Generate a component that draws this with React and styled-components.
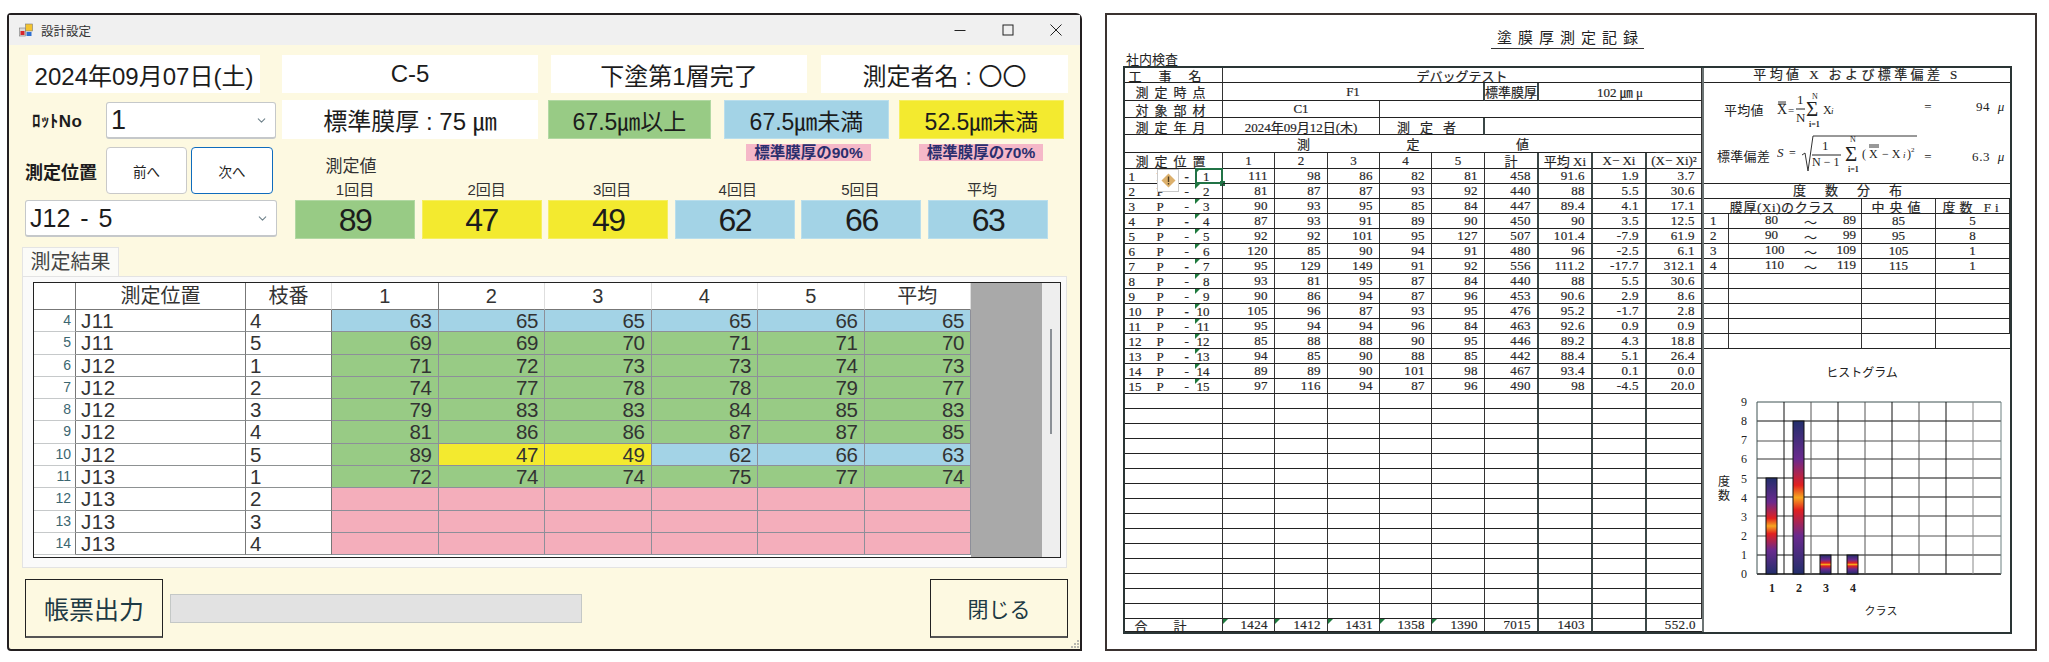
import React from 'react';
import styled, { createGlobalStyle } from 'styled-components';
import { ChevronDown } from 'lucide-react';

const GOTHIC = '"Liberation Sans", "Noto Sans CJK JP", sans-serif';
const MINCHO = '"Liberation Serif", "Noto Sans CJK JP", serif';

const GREEN = '#98cb85';
const BLUE = '#a3d3e6';
const YELLOW = '#f3ea2f';
const PINK = '#f4aebb';

const GlobalStyle = createGlobalStyle`
  html, body {
    margin: 0;
    background: #fff;
    overflow: hidden;
  }
`;

const Page = styled.div`
  display: flex;
  align-items: flex-start;
  width: 2049px;
  height: 662px;
  padding: 13px 0 0 7px;
  box-sizing: border-box;
`;

/* ---- left: the measuring window ---- */

const Window = styled.div`
  position: relative;
  width: 1075px;
  height: 638px;
  box-sizing: border-box;
  border: 2px solid #231f20;
  border-radius: 4px 6px 0 4px;
  background: #fdf9e1;
  font-family: ${GOTHIC};
  color: #1c1c1c;
  flex: none;
`;

const TitleBar = styled.div`
  display: flex;
  align-items: center;
  height: 30px;
  padding: 0 18px 0 10px;
  background: #f0f0f0;
  font-size: 12.5px;
  color: #333;
`;

const TitleText = styled.span`
  margin-left: 8px;
  margin-right: auto;
`;

const WinControls = styled.div`
  display: flex;
  gap: 36px;
  align-items: center;
`;

const WinRow = styled.div`
  display: flex;
  margin-top: ${p => p.$top || 0}px;
  padding-left: ${p => p.$left}px;
`;

const InfoBox = styled.div`
  display: flex;
  align-items: center;
  justify-content: center;
  width: ${p => p.$w}px;
  height: ${p => p.$h || 38}px;
  margin-left: ${p => p.$gap || 0}px;
  background: #fff;
  font-size: 24px;
  white-space: nowrap;
`;

const LegendBox = styled.div`
  display: flex;
  align-items: center;
  justify-content: center;
  width: ${p => p.$w}px;
  height: 39px;
  margin-left: ${p => p.$gap || 0}px;
  box-sizing: border-box;
  background: ${p => p.$bg};
  border: 1px solid rgba(255, 255, 255, 0.25);
  font-size: 23px;
  white-space: nowrap;
`;

const LotLabel = styled.div`
  width: 74px;
  height: 39px;
  display: flex;
  align-items: center;
  font-size: 17px;
  font-weight: 700;
  letter-spacing: 0.4px;
`;

const Combo = styled.div`
  display: flex;
  align-items: center;
  justify-content: space-between;
  width: ${p => p.$w}px;
  height: 37px;
  margin-top: ${p => p.$top || 0}px;
  padding: 0 7px 0 4px;
  box-sizing: border-box;
  background: #fff;
  border: 1px solid #c5c8ca;
  border-bottom-width: 2px;
  border-radius: 3px;
  font-size: ${p => p.$size}px;
  word-spacing: 3px;
  flex: none;

  & > svg {
    color: #70838c;
  }
`;

const LowerRow = styled.div`
  display: flex;
  margin-top: 5px;
  padding-left: 16px;
`;

const LeftCol = styled.div`
  width: 252px;
  padding-top: 3px;
  flex: none;
`;

const PositionRow = styled.div`
  display: flex;
  align-items: center;
  height: 47px;
`;

const PositionLabel = styled.div`
  width: 82px;
  font-size: 18px;
  font-weight: 700;
`;

const NavButton = styled.button`
  width: ${p => p.$w}px;
  height: 47px;
  margin-right: 4px;
  padding: 0;
  background: #fff;
  border: 1px solid ${p => (p.$focus ? '#0f6cbd' : '#c9c9c9')};
  border-radius: 4px;
  font-family: inherit;
  font-size: 13.5px;
  color: #222;
`;

const ValueCol = styled.div`
  margin-left: 5px;
  padding-left: 13px;
  flex: none;
`;

const NoteRow = styled.div`
  display: flex;
  height: 17px;
  padding-left: 451px;
`;

const Note = styled.div`
  width: ${p => p.$w}px;
  margin-right: ${p => p.$gap || 0}px;
  height: 17px;
  background: #f5b8c8;
  color: #2b2f6e;
  font-size: 15.5px;
  line-height: 17px;
  font-weight: 700;
  text-align: center;
  white-space: nowrap;
`;

const Caption = styled.div`
  width: 112px;
  margin-top: -3px;
  height: 18px;
  line-height: 18px;
  font-size: 17px;
  text-align: center;
  color: #333;
`;

const ValueGrid = styled.div`
  display: grid;
  grid-template-columns: repeat(6, 120px);
  column-gap: 6.6px;
  margin-top: 5px;
`;

const ValueLabel = styled.div`
  height: 18px;
  line-height: 18px;
  margin-left: ${p => p.$dx || 0}px;
  font-size: 15px;
  text-align: center;
  color: #333;
`;

const ValueBox = styled.div`
  height: 39px;
  margin-top: 1px;
  box-sizing: border-box;
  background: ${p => p.$bg};
  border: 1px solid rgba(255, 255, 255, 0.25);
  font-size: 32px;
  letter-spacing: -1.5px;
  line-height: 38px;
  text-align: center;
`;

const Tab = styled.div`
  width: 97px;
  height: 29px;
  margin: 8px 0 0 13px;
  box-sizing: border-box;
  background: #fbfbf8;
  border: 1px solid #e4e4e4;
  border-bottom: none;
  font-size: 20px;
  line-height: 28px;
  text-align: center;
  color: #444;
`;

const TabPanel = styled.div`
  width: 1045px;
  height: 292px;
  margin-left: 13px;
  padding: 5px 0 0 10px;
  box-sizing: border-box;
  background: #fafafa;
  border: 1px solid #e3e3e3;
`;

const GridFrame = styled.div`
  display: flex;
  width: 1028px;
  height: 276px;
  box-sizing: border-box;
  border: 1px solid #222;
  border-width: 1px 1.5px 1.5px 1.5px;
  overflow: hidden;
`;

const GridBody = styled.div`
  width: 937px;
  flex: none;
  background: #fff;
`;

const GridGray = styled.div`
  width: 71px;
  flex: none;
  background: #a9a9a9;
`;

const GridScroll = styled.div`
  display: flex;
  justify-content: center;
  width: 18px;
  padding-top: 46px;
  box-sizing: border-box;
  background: #eee;
`;

const ScrollThumb = styled.div`
  width: 2px;
  height: 105px;
  background: #8b9096;
`;

const GridRow = styled.div`
  display: grid;
  grid-template-columns: 42px 170px 86px repeat(6, 106.5px);
  height: ${p => (p.$head ? 27 : 22.3)}px;
`;

const HeadCell = styled.div`
  box-sizing: border-box;
  border-right: 1px solid ${p => (p.$dark ? '#777' : '#dedede')};
  border-bottom: 1px solid #777;
  font-size: 20px;
  line-height: 26px;
  text-align: center;
  color: #333;
`;

const RowHead = styled.div`
  box-sizing: border-box;
  padding-right: 4px;
  border-right: 1px solid #777;
  border-bottom: 1px solid #c6c9ca;
  font-size: 14px;
  line-height: 21px;
  text-align: right;
  color: #3b6670;
`;

const TextCell = styled.div`
  box-sizing: border-box;
  padding-left: ${p => p.$pad}px;
  border-right: 1px solid #777;
  border-bottom: 1px solid #8d9192;
  font-size: 20.5px;
  line-height: 21px;
  letter-spacing: 0.6px;
  color: #333;
`;

const NumCell = styled.div`
  box-sizing: border-box;
  padding-right: 6px;
  background: ${p => p.$bg};
  border-right: 1px solid #8d8f99;
  border-bottom: 1px solid #8d8f99;
  font-size: 20.5px;
  letter-spacing: -0.4px;
  line-height: 21px;
  text-align: right;
  color: #333;
`;

const FootRow = styled.div`
  display: flex;
  align-items: center;
  height: 59px;
  margin-top: 11px;
  padding: 0 12px 0 16px;
`;

const BigButton = styled.button`
  width: 138px;
  height: 59px;
  padding: 0;
  margin-left: ${p => (p.$right ? 'auto' : 0)};
  background: #fdf9e1;
  border: 1px solid #222;
  border-bottom: 2px solid #555;
  font-family: inherit;
  font-size: ${p => p.$size}px;
  color: #1d3a44;
`;

const Progress = styled.div`
  width: 412px;
  height: 29px;
  margin-left: 7px;
  box-sizing: border-box;
  background: #e2e2e2;
  border: 1px solid #c4c8c6;
`;

const Grip = styled.svg`
  position: absolute;
  right: 0;
  bottom: 0;
`;

/* ---- right: the printed sheet ---- */

const Doc = styled.div`
  width: 932px;
  height: 638px;
  margin-left: 23px;
  padding: 15px 0 0 16px;
  box-sizing: border-box;
  border: 2px solid #3a3230;
  background: #fff;
  font-family: ${MINCHO};
  color: #222;
  flex: none;
`;

const DocTitleWrap = styled.div`
  display: flex;
  justify-content: center;
  width: 889px;
  height: 19px;
`;

const DocTitle = styled.span`
  height: 18px;
  line-height: 17px;
  padding-left: 6px;
  border-bottom: 1px solid #333;
  font-size: 15px;
  letter-spacing: 6px;
`;

const DocSub = styled.div`
  height: 17px;
  font-size: 13px;
  line-height: 22px;
  padding-left: 3px;
`;

const Sheet = styled.div`
  display: flex;
  width: 889px;
  height: 568px;
  box-sizing: border-box;
  border: 2px solid #2a3535;
`;

const MainTable = styled.div`
  display: grid;
  grid-template-columns: 98px 52px 53px 52px 52px 53px 54px 54px 54px 55px;
  grid-template-rows: 15px 18px 17px 17px 18px 16px repeat(30, 15px) 13px;
  flex: none;
`;

const Cell = styled.div`
  position: relative;
  display: flex;
  align-items: center;
  justify-content: ${p => p.$align || 'center'};
  grid-column: span ${p => p.$span || 1};
  box-sizing: border-box;
  padding-right: ${p => (p.$align === 'flex-end' ? 6 : 0)}px;
  padding-left: ${p => (p.$align === 'flex-start' ? 6 : 0)}px;
  border-right: ${p => (p.$thick ? '2px solid #3b4747' : '1px solid #333')};
  border-bottom: 1px solid #222;
  font-size: 13px;
  letter-spacing: ${p => p.$ls || 0}px;
  -webkit-text-stroke: 0.2px #333;
  white-space: nowrap;
  &:last-child {
    border-right: none;
  }
`;

const SpreadCell = styled(Cell)`
  display: grid;
  grid-template-columns: 28px 28px 12px 26px;
  align-items: center;
  padding-left: 4px;
  font-size: 13px;
`;

const DashMark = styled.span`
  font-weight: ${p => (p.$bold ? 700 : 400)};
`;

const SpreadNum = styled.span`
  text-align: right;
  padding-right: 13px;
`;

const Flag = styled.span`
  position: absolute;
  top: 0;
  left: ${p => p.$x}px;
  border-top: 5px solid #1f7a3e;
  border-right: 5px solid transparent;
`;

const Selected = styled.span`
  position: absolute;
  left: 70px;
  top: -1px;
  width: 28px;
  height: 16px;
  box-sizing: border-box;
  border: 2px solid #217346;
  &::after {
    content: '';
    position: absolute;
    right: -4px;
    bottom: -4px;
    width: 5px;
    height: 5px;
    background: #217346;
  }
`;

const WarnPopup = styled.span`
  position: absolute;
  z-index: 2;
  left: 32px;
  top: 0;
  display: flex;
  align-items: center;
  justify-content: center;
  width: 22px;
  height: 23px;
  box-sizing: border-box;
  background: #fff;
  border: 1px solid #c9c9c9;
`;

const Spread3 = styled.span`
  display: flex;
  justify-content: space-between;
  width: 100%;
  padding: 0 ${p => p.$r}px 0 ${p => p.$l}px;
  box-sizing: border-box;
`;

const SideCol = styled.div`
  width: 306px;
  flex: none;
  border-left: 2px solid #6c7474;
`;

const SideHead = styled.div`
  height: 15px;
  line-height: 14px;
  box-sizing: border-box;
  border-bottom: 1px solid #222;
  font-size: 13px;
  letter-spacing: ${p => p.$ls}px;
  text-align: center;
  -webkit-text-stroke: 0.2px #333;
`;

const Over = styled.span`
  text-decoration: overline;
`;

const FormulaArea = styled.div`
  display: grid;
  grid-template-columns: 73px 140px 22px 1fr;
  grid-template-rows: 47px 54px;
  align-items: center;
  height: 101px;
  box-sizing: border-box;
  border-bottom: 1px solid #222;
  font-size: 13px;
  font-family: ${GOTHIC};
`;

const FormulaLabel = styled.div`
  padding-left: ${p => p.$pad}px;
  white-space: nowrap;
  letter-spacing: 0.3px;
  margin-top: ${p => p.$top || 0}px;
`;

const FormulaEq = styled.div`
  font-family: ${MINCHO};
  text-align: center;
`;

const FormulaValue = styled.div`
  padding-right: 5px;
  font-family: ${MINCHO};
  text-align: right;
  letter-spacing: 0.6px;
`;

const FreqTable = styled.div`
  display: grid;
  grid-template-columns: 25px 133px 74px 74px;
  grid-template-rows: repeat(10, 15px);
`;

const ChartWrap = styled.div`
  height: 285px;
`;

const SIDE_VALUE_LABELS = ['1回目', '2回目', '3回目', '4回目', '5回目', '平均'];
const SIDE_VALUE_SHIFT = [0, 10, 8, 6, -2, -12];
const TOP_VALUES = [
  { v: 89, bg: GREEN },
  { v: 47, bg: YELLOW },
  { v: 49, bg: YELLOW },
  { v: 62, bg: BLUE },
  { v: 66, bg: BLUE },
  { v: 63, bg: BLUE },
];

const GRID_ROWS = [
  [4, 'J11', 4, [63, 65, 65, 65, 66, 65]],
  [5, 'J11', 5, [69, 69, 70, 71, 71, 70]],
  [6, 'J12', 1, [71, 72, 73, 73, 74, 73]],
  [7, 'J12', 2, [74, 77, 78, 78, 79, 77]],
  [8, 'J12', 3, [79, 83, 83, 84, 85, 83]],
  [9, 'J12', 4, [81, 86, 86, 87, 87, 85]],
  [10, 'J12', 5, [89, 47, 49, 62, 66, 63]],
  [11, 'J13', 1, [72, 74, 74, 75, 77, 74]],
  [12, 'J13', 2, null],
  [13, 'J13', 3, null],
  [14, 'J13', 4, null],
];

const SHEET_ROWS = [
  [111, 98, 86, 82, 81, 458, '91.6', '1.9', '3.7'],
  [81, 87, 87, 93, 92, 440, '88', '5.5', '30.6'],
  [90, 93, 95, 85, 84, 447, '89.4', '4.1', '17.1'],
  [87, 93, 91, 89, 90, 450, '90', '3.5', '12.5'],
  [92, 92, 101, 95, 127, 507, '101.4', '-7.9', '61.9'],
  [120, 85, 90, 94, 91, 480, '96', '-2.5', '6.1'],
  [95, 129, 149, 91, 92, 556, '111.2', '-17.7', '312.1'],
  [93, 81, 95, 87, 84, 440, '88', '5.5', '30.6'],
  [90, 86, 94, 87, 96, 453, '90.6', '2.9', '8.6'],
  [105, 96, 87, 93, 95, 476, '95.2', '-1.7', '2.8'],
  [95, 94, 94, 96, 84, 463, '92.6', '0.9', '0.9'],
  [85, 88, 88, 90, 95, 446, '89.2', '4.3', '18.8'],
  [94, 85, 90, 88, 85, 442, '88.4', '5.1', '26.4'],
  [89, 89, 90, 101, 98, 467, '93.4', '0.1', '0.0'],
  [97, 116, 94, 87, 96, 490, '98', '-4.5', '20.0'],
];

const TOTALS = [1424, 1412, 1431, 1358, 1390, 7015, 1403, '', '552.0'];
const FREQ = [
  [1, 80, 89, 85, 5],
  [2, 90, 99, 95, 8],
  [3, 100, 109, 105, 1],
  [4, 110, 119, 115, 1],
];

const THICK_COLS = [5, 6, 7];

function cellColor(v) {
  if (v >= 67.5) return GREEN;
  if (v >= 52.5) return BLUE;
  return YELLOW;
}

function AppIcon() {
  return (
    <svg width="14" height="14" viewBox="0 0 14 14">
      <rect x="0.5" y="5" width="6" height="8" fill="#d9d9d9" stroke="#7a7a7a" strokeWidth="0.6" />
      <rect x="1.5" y="8" width="4" height="4" fill="#d8262c" />
      <rect x="6.5" y="1" width="7" height="7" fill="#f4c430" stroke="#7a7a7a" strokeWidth="0.6" />
      <rect x="7.5" y="9" width="5" height="4" fill="#2f6fd0" />
    </svg>
  );
}

function WindowButtons() {
  return (
    <WinControls>
      <svg width="12" height="12" viewBox="0 0 12 12">
        <path d="M0.5 6.5h11" stroke="#222" fill="none" />
      </svg>
      <svg width="12" height="12" viewBox="0 0 12 12">
        <rect x="1" y="1" width="10" height="10" stroke="#222" fill="none" />
      </svg>
      <svg width="12" height="12" viewBox="0 0 12 12">
        <path d="M0.5 0.5l11 11M11.5 0.5l-11 11" stroke="#222" fill="none" />
      </svg>
    </WinControls>
  );
}

function MeasureWindow() {
  return (
    <Window>
      <TitleBar>
        <AppIcon />
        <TitleText>設計設定</TitleText>
        <WindowButtons />
      </TitleBar>

      <WinRow $top={10} $left={19}>
        <InfoBox $w={232}>2024年09月07日(土)</InfoBox>
        <InfoBox $w={256} $gap={22}>C-5</InfoBox>
        <InfoBox $w={256} $gap={13}>下塗第1層完了</InfoBox>
        <InfoBox $w={247} $gap={14}>測定者名 : 〇〇</InfoBox>
      </WinRow>

      <WinRow $top={7} $left={23}>
        <LotLabel>ﾛｯﾄNo</LotLabel>
        <Combo $w={170} $top={2} $size={27}>
          1
          <ChevronDown size={13} />
        </Combo>
        <InfoBox $w={256} $h={39} $gap={6}>標準膜厚 : 75 ㎛</InfoBox>
        <LegendBox $w={163} $gap={10} $bg={GREEN}>67.5㎛以上</LegendBox>
        <LegendBox $w={165} $gap={13} $bg={BLUE}>67.5㎛未満</LegendBox>
        <LegendBox $w={165} $gap={10} $bg={YELLOW}>52.5㎛未満</LegendBox>
      </WinRow>

      <LowerRow>
        <LeftCol>
          <PositionRow>
            <PositionLabel>測定位置</PositionLabel>
            <NavButton $w={82}>前へ</NavButton>
            <NavButton $w={83} $focus>次へ</NavButton>
          </PositionRow>
          <Combo $w={252} $top={6} $size={25}>
            J12 - 5
            <ChevronDown size={13} />
          </Combo>
        </LeftCol>
        <ValueCol>
          <NoteRow>
            <Note $w={125} $gap={48}>標準膜厚の90%</Note>
            <Note $w={124}>標準膜厚の70%</Note>
          </NoteRow>
          <Caption>測定値</Caption>
          <ValueGrid>
            {SIDE_VALUE_LABELS.map((label, i) => (
              <ValueLabel key={label} $dx={SIDE_VALUE_SHIFT[i]}>{label}</ValueLabel>
            ))}
            {TOP_VALUES.map((item, i) => (
              <ValueBox key={i} $bg={item.bg}>{item.v}</ValueBox>
            ))}
          </ValueGrid>
        </ValueCol>
      </LowerRow>

      <Tab>測定結果</Tab>
      <TabPanel>
        <GridFrame>
          <GridBody>
            <GridRow $head>
              <HeadCell $dark />
              <HeadCell $dark>測定位置</HeadCell>
              <HeadCell>枝番</HeadCell>
              <HeadCell $dark>1</HeadCell>
              <HeadCell>2</HeadCell>
              <HeadCell>3</HeadCell>
              <HeadCell>4</HeadCell>
              <HeadCell>5</HeadCell>
              <HeadCell>平均</HeadCell>
            </GridRow>
            {GRID_ROWS.map(([no, pos, sub, vals]) => (
              <GridRow key={no}>
                <RowHead>{no}</RowHead>
                <TextCell $pad={5}>{pos}</TextCell>
                <TextCell $pad={4}>{sub}</TextCell>
                {(vals || ['', '', '', '', '', '']).map((v, i) => (
                  <NumCell key={i} $bg={vals ? cellColor(v) : PINK}>{v}</NumCell>
                ))}
              </GridRow>
            ))}
          </GridBody>
          <GridGray />
          <GridScroll>
            <ScrollThumb />
          </GridScroll>
        </GridFrame>
      </TabPanel>

      <FootRow>
        <BigButton $size={25}>帳票出力</BigButton>
        <Progress />
        <BigButton $size={21} $right>閉じる</BigButton>
      </FootRow>

      <Grip width="10" height="10" viewBox="0 0 10 10">
        <g fill="#b8b8b0">
          <rect x="7" y="1" width="2" height="2" />
          <rect x="4" y="4" width="2" height="2" />
          <rect x="7" y="4" width="2" height="2" />
          <rect x="1" y="7" width="2" height="2" />
          <rect x="4" y="7" width="2" height="2" />
          <rect x="7" y="7" width="2" height="2" />
        </g>
      </Grip>
    </Window>
  );
}

function FormulaMean() {
  return (
    <svg width="140" height="47" viewBox="0 0 140 47" fontFamily="Liberation Serif" fill="#222">
      <text x="0" y="31" fontSize="14">X</text>
      <path d="M1 19h8M1 21h8" stroke="#333" fill="none" />
      <text x="11" y="31" fontSize="11">=</text>
      <text x="20" y="21" fontSize="13">1</text>
      <path d="M19 26h9" stroke="#222" fill="none" />
      <text x="19" y="39" fontSize="13">N</text>
      <text x="29" y="33" fontSize="21">Σ</text>
      <text x="35" y="16" fontSize="8">N</text>
      <text x="32" y="44" fontSize="8" fontWeight="700">i=1</text>
      <text x="46" y="31" fontSize="12">X</text>
      <text x="54" y="31" fontSize="9" fontStyle="italic">i</text>
    </svg>
  );
}

function FormulaDeviation() {
  return (
    <svg width="140" height="54" viewBox="0 0 140 54" fontFamily="Liberation Serif" fill="#222">
      <text x="0" y="27" fontSize="13" fontStyle="italic">S</text>
      <text x="12" y="27" fontSize="12">=</text>
      <path d="M25 25l3 -2l3 18l5 -35h104" stroke="#333" fill="none" />
      <text x="45" y="20" fontSize="13">1</text>
      <path d="M35 25h29" stroke="#222" fill="none" />
      <text x="35" y="36" fontSize="12">N − 1</text>
      <text x="68" y="31" fontSize="21">Σ</text>
      <text x="73" y="12" fontSize="8">N</text>
      <text x="71" y="42" fontSize="8" fontWeight="700">i=1</text>
      <text x="85" y="28" fontSize="12">( X</text>
      <path d="M92 17h10M92 15h10" stroke="#333" fill="none" />
      <text x="105" y="28" fontSize="12">− X</text>
      <text x="126" y="28" fontSize="9" fontStyle="italic">i</text>
      <text x="130" y="28" fontSize="12">)</text>
      <text x="134" y="22" fontSize="7">2</text>
    </svg>
  );
}

const H_LINES = [
  [53, '#3e5353', 1], [72, '#111', 1], [92, '#8a8a8a', 1.6], [110, '#333', 1], [129, '#111', 1],
  [148, '#111', 1], [167, '#333', 1], [187, '#555', 1], [206, '#111', 1], [225, '#111', 1.4],
];
const V_LINES = [
  [55, '#3e5353'], [82, '#111'], [109, '#555'], [136, '#111'], [163, '#555'],
  [190, '#111'], [217, '#555'], [244, '#111'], [271, '#888'], [299, '#6c8080'],
];
const BARS = [
  { x: 64, top: 129, h: 96 },
  { x: 91, top: 72, h: 153 },
  { x: 118, top: 206, h: 19 },
  { x: 145, top: 206, h: 19 },
];

function Histogram() {
  return (
    <svg width="306" height="285" viewBox="2 0 306 285" fontFamily="Liberation Serif" fill="#222">
      <defs>
        <linearGradient id="barFill" x1="0" x2="0" y1="0" y2="1">
          <stop offset="0" stopColor="#232f6c" />
          <stop offset="0.25" stopColor="#6a2a8e" />
          <stop offset="0.42" stopColor="#e2201f" />
          <stop offset="0.5" stopColor="#f7a620" />
          <stop offset="0.58" stopColor="#e2201f" />
          <stop offset="0.75" stopColor="#6a2a8e" />
          <stop offset="1" stopColor="#232f6c" />
        </linearGradient>
      </defs>
      <text x="160" y="28" fontSize="12" fontFamily="Noto Sans CJK JP" textAnchor="middle">ヒストグラム</text>
      {H_LINES.map(([y, color, w]) => (
        <path key={y} d={`M55 ${y}H299`} stroke={color} strokeWidth={w} fill="none" />
      ))}
      {V_LINES.map(([x, color]) => (
        <path key={x} d={`M${x} 53V225`} stroke={color} fill="none" />
      ))}
      {BARS.map(bar => (
        <rect key={bar.x} x={bar.x} y={bar.top} width="11" height={bar.h} fill="url(#barFill)" stroke="#111" />
      ))}
      {[0, 1, 2, 3, 4, 5, 6, 7, 8, 9].map(n => (
        <text key={n} x="42" y={229 - n * 19.1} fontSize="12" textAnchor="middle">{n}</text>
      ))}
      {[1, 2, 3, 4].map((n, i) => (
        <text key={n} x={70 + i * 27} y="243" fontSize="12" textAnchor="middle" fontWeight="700">{n}</text>
      ))}
      <text x="22" y="137" fontSize="12" fontFamily="Noto Sans CJK JP" textAnchor="middle">度</text>
      <text x="22" y="151" fontSize="12" fontFamily="Noto Sans CJK JP" textAnchor="middle">数</text>
      <text x="179" y="266" fontSize="11" fontFamily="Noto Sans CJK JP" textAnchor="middle">クラス</text>
    </svg>
  );
}

function PrintedSheet() {
  const blanks = Array.from({ length: 15 });
  return (
    <Doc>
      <DocTitleWrap>
        <DocTitle>塗膜厚測定記録</DocTitle>
      </DocTitleWrap>
      <DocSub>社内検査</DocSub>
      <Sheet>
        <MainTable>
          <Cell $ls={17}>工事名</Cell>
          <Cell $span={9}>デバッグテスト</Cell>

          <Cell $ls={6}>測定時点</Cell>
          <Cell $span={5} $thick>F1</Cell>
          <Cell $thick>標準膜厚</Cell>
          <Cell $span={3}>102 ㎛ μ</Cell>

          <Cell $ls={6}>対象部材</Cell>
          <Cell $span={3}>C1</Cell>
          <Cell $span={6} />

          <Cell $ls={6}>測定年月</Cell>
          <Cell $span={3}>2024年09月12日(木)</Cell>
          <Cell $span={2} $thick $ls={10}>測定者</Cell>
          <Cell $span={4} />

          <Cell $span={10}>
            <Spread3 $l={172} $r={172}>
              <span>測</span>
              <span>定</span>
              <span>値</span>
            </Spread3>
          </Cell>

          <Cell $ls={6}>測定位置</Cell>
          {['1', '2', '3', '4', '5', '計', '平均 Xi'].map((h, i) => (
            <Cell key={h} $thick={THICK_COLS.includes(i)}>{h}</Cell>
          ))}
          <Cell $thick><Over>X</Over>− Xi</Cell>
          <Cell>(<Over>X</Over>− Xi)²</Cell>

          {SHEET_ROWS.map((row, r) => (
            <React.Fragment key={r}>
              <SpreadCell>
                <span>{r + 1}</span>
                <span>P</span>
                <DashMark $bold={r % 3 === 0}>-</DashMark>
                <SpreadNum>{r + 1}</SpreadNum>
                <Flag $x={70} />
                {r === 0 && <Selected />}
                {r === 0 && (
                  <WarnPopup>
                    <svg width="15" height="15" viewBox="0 0 15 15">
                      <path d="M7.5 0.5L14.5 7.5L7.5 14.5L0.5 7.5Z" fill="#dcb06c" />
                      <path d="M6.8 3.5h1.4v5.5H6.8zM6.8 10h1.4v1.6H6.8z" fill="#4a3a20" />
                    </svg>
                  </WarnPopup>
                )}
              </SpreadCell>
              {row.map((v, i) => (
                <Cell key={i} $align="flex-end" $thick={THICK_COLS.includes(i)} $ls={0.4}>{v}</Cell>
              ))}
            </React.Fragment>
          ))}

          {blanks.map((_, r) => (
            <React.Fragment key={r}>
              <Cell />
              {SHEET_ROWS[0].map((_v, i) => (
                <Cell key={i} $thick={THICK_COLS.includes(i)} />
              ))}
            </React.Fragment>
          ))}

          <Cell $ls={26}>合計</Cell>
          {TOTALS.map((v, i) => (
            <Cell key={i} $align="flex-end" $thick={THICK_COLS.includes(i)} $ls={0.4}>
              {i < 5 && <Flag $x={0} />}
              {v}
            </Cell>
          ))}
        </MainTable>

        <SideCol>
          <SideHead $ls={3.4}>平均値 <Over>X</Over> および標準偏差 S</SideHead>
          <FormulaArea>
            <FormulaLabel $pad={20} $top={6}>平均値</FormulaLabel>
            <FormulaMean />
            <FormulaEq>=</FormulaEq>
            <FormulaValue>94&nbsp; <i>μ</i></FormulaValue>
            <FormulaLabel $pad={13} $top={-4}>標準偏差</FormulaLabel>
            <FormulaDeviation />
            <FormulaEq>=</FormulaEq>
            <FormulaValue>6.3&nbsp; <i>μ</i></FormulaValue>
          </FormulaArea>
          <SideHead $ls={19}>度数分布</SideHead>
          <FreqTable>
            <Cell $span={2} $ls={0.6}>膜厚(Xi)のクラス</Cell>
            <Cell $ls={5}>中央値</Cell>
            <Cell $ls={4}>度数 Fi</Cell>
            {FREQ.map(([n, lo, hi, mid, f]) => (
              <React.Fragment key={n}>
                <Cell $align="flex-start">{n}</Cell>
                <Cell>
                  <Spread3 $l={36} $r={5}>
                    <span>{lo}</span>
                    <span>～</span>
                    <span>{hi}</span>
                  </Spread3>
                </Cell>
                <Cell>{mid}</Cell>
                <Cell>{f}</Cell>
              </React.Fragment>
            ))}
            {Array.from({ length: 5 }).map((_, r) => (
              <React.Fragment key={r}>
                <Cell />
                <Cell />
                <Cell />
                <Cell />
              </React.Fragment>
            ))}
          </FreqTable>
          <ChartWrap>
            <Histogram />
          </ChartWrap>
        </SideCol>
      </Sheet>
    </Doc>
  );
}

export default function App() {
  return (
    <>
      <GlobalStyle />
      <Page>
        <MeasureWindow />
        <PrintedSheet />
      </Page>
    </>
  );
}
